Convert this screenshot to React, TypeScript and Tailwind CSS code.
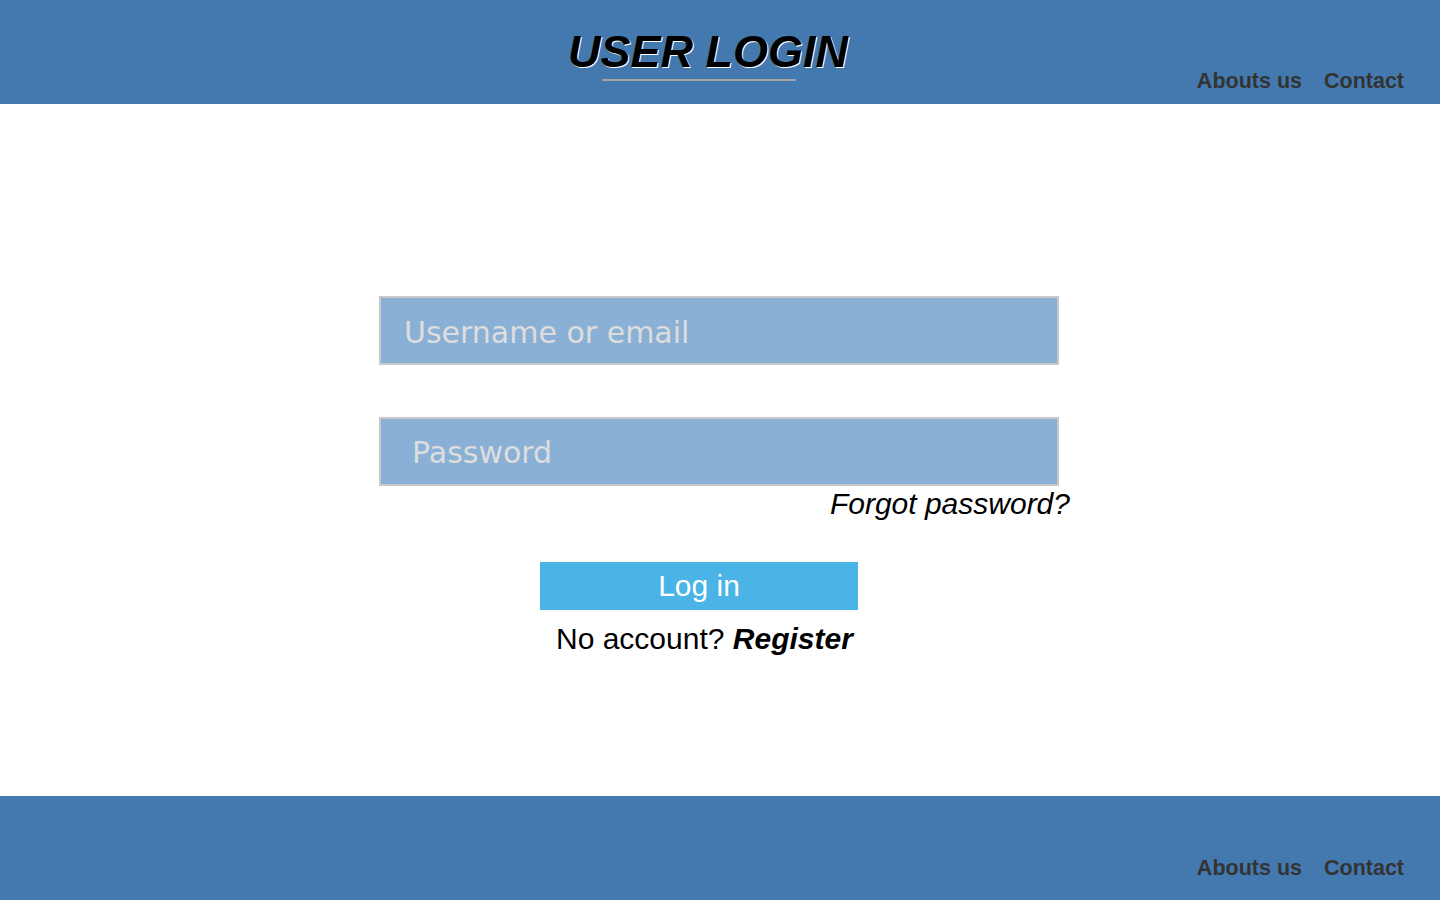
import React from "react";

function Nav({ className }: { className?: string }) {
  return (
    <nav className={"ml-auto mr-[36px] flex gap-[22px] text-[21.5px] leading-[22px] font-bold text-[#333333] " + (className || "")}>
      <a href="#" className="text-[#333333]">Abouts us</a>
      <a href="#" className="text-[#333333]">Contact</a>
    </nav>
  );
}

export default function App() {
  return (
    <div className="w-full h-[900px] flex flex-col bg-white" style={{ fontFamily: '"Liberation Sans", Arial, sans-serif' }}>
      <header className="h-[104px] bg-[#4479b0] flex items-start">
        <div className="ml-[568px] pt-[30px] w-[290px] flex flex-col">
          <h1 className="text-[45px] leading-[44px] font-bold italic text-black [text-shadow:1px_1px_0_#ffffff] whitespace-nowrap">
            USER LOGIN
          </h1>
          <div className="mt-[5px] ml-[34px] w-[194px] h-[2px] bg-[#a3a3a3]" />
        </div>
        <Nav className="mt-[70px]" />
      </header>

      <main className="flex-1 flex flex-col pt-[192px]">
        <input
          type="text"
          placeholder="Username or email"
          className="ml-[379px] w-[680px] h-[69px] border-2 border-[#c8c8c8] bg-[#8ab0d6] pl-[23px] pt-[4px] text-[30px] text-[#dddddd] placeholder:text-[#dddddd] outline-none"
          style={{ fontFamily: '"DejaVu Sans", Verdana, sans-serif' }}
        />
        <input
          type="password"
          placeholder="Password"
          className="mt-[52px] ml-[379px] w-[680px] h-[69px] border-2 border-[#c8c8c8] bg-[#8ab0d6] pl-[31px] pt-[2px] text-[30px] text-[#dddddd] placeholder:text-[#dddddd] outline-none"
          style={{ fontFamily: '"DejaVu Sans", Verdana, sans-serif' }}
        />
        <div className="ml-[379px] w-[691px] mt-[3px] text-right text-[30px] leading-[30px] italic text-black">
          <a href="#">Forgot password?</a>
        </div>
        <button className="mt-[43px] ml-[540px] w-[318px] h-[48px] bg-[#4bb4e6] text-white text-[30px] leading-[30px] flex items-center justify-center">
          Log in
        </button>
        <p className="mt-[14px] ml-[556px] text-[30px] leading-[30px] text-black whitespace-nowrap">
          No account? <a href="#" className="font-bold italic">Register</a>
        </p>
      </main>

      <footer className="h-[104px] bg-[#4479b0] flex items-start">
        <Nav className="mt-[61px]" />
      </footer>
    </div>
  );
}
